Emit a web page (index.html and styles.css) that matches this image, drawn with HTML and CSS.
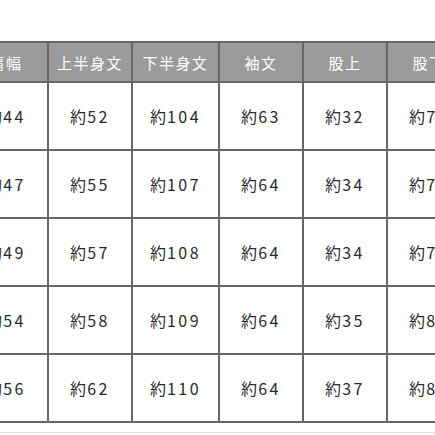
FILE: index.html
```html
<!DOCTYPE html>
<html lang="ja">
<head>
<meta charset="utf-8">
<link rel="stylesheet" href="styles.css">
</head>
<body>
<div class="wrap">
<table class="size">
<colgroup>
<col class="c84"><col class="c84"><col class="c87"><col class="c84"><col class="c84"><col class="c84">
</colgroup>
<thead>
<tr><th>肩幅</th><th>上半身文</th><th>下半身文</th><th>袖文</th><th>股上</th><th>股下</th></tr>
</thead>
<tbody>
<tr><td>約44</td><td>約52</td><td>約104</td><td>約63</td><td>約32</td><td>約76</td></tr>
<tr><td>約47</td><td>約55</td><td>約107</td><td>約64</td><td>約34</td><td>約77</td></tr>
<tr><td>約49</td><td>約57</td><td>約108</td><td>約64</td><td>約34</td><td>約78</td></tr>
<tr><td>約54</td><td>約58</td><td>約109</td><td>約64</td><td>約35</td><td>約80</td></tr>
<tr><td>約56</td><td>約62</td><td>約110</td><td>約64</td><td>約37</td><td>約81</td></tr>
</tbody>
</table>
<div class="rule"></div>
</div>
</body>
</html>
```
FILE: styles.css
```css
html, body {
  margin: 0;
  padding: 0;
  overflow: hidden;
  background: #fff;
}
body {
  width: 435px;
  height: 435px;
  font-family: "Noto Sans CJK JP", "Noto Sans", sans-serif;
}
.wrap {
  padding-top: 41px;
  margin-left: -37px;
  width: 520px;
}
.size {
  border-collapse: collapse;
  table-layout: fixed;
  width: 507px;
}
.c84 { width: 84px; }
.c87 { width: 87px; }
.size th,
.size td {
  border: 2px solid #676767;
  text-align: center;
  padding: 0;
  white-space: nowrap;
  overflow: hidden;
}
.size th {
  background: #9b9b9b;
  color: #fff;
  font-weight: 400;
  font-size: 15px;
  letter-spacing: 1.5px;
  height: 38px;
}
.size td {
  color: #2a2a2a;
  font-size: 16px;
  letter-spacing: 2.5px;
  height: 66px;
}
.size td::first-letter {
  letter-spacing: 1px;
}
.rule {
  margin-top: 9px;
  height: 1px;
  background: #dedede;
}
```
